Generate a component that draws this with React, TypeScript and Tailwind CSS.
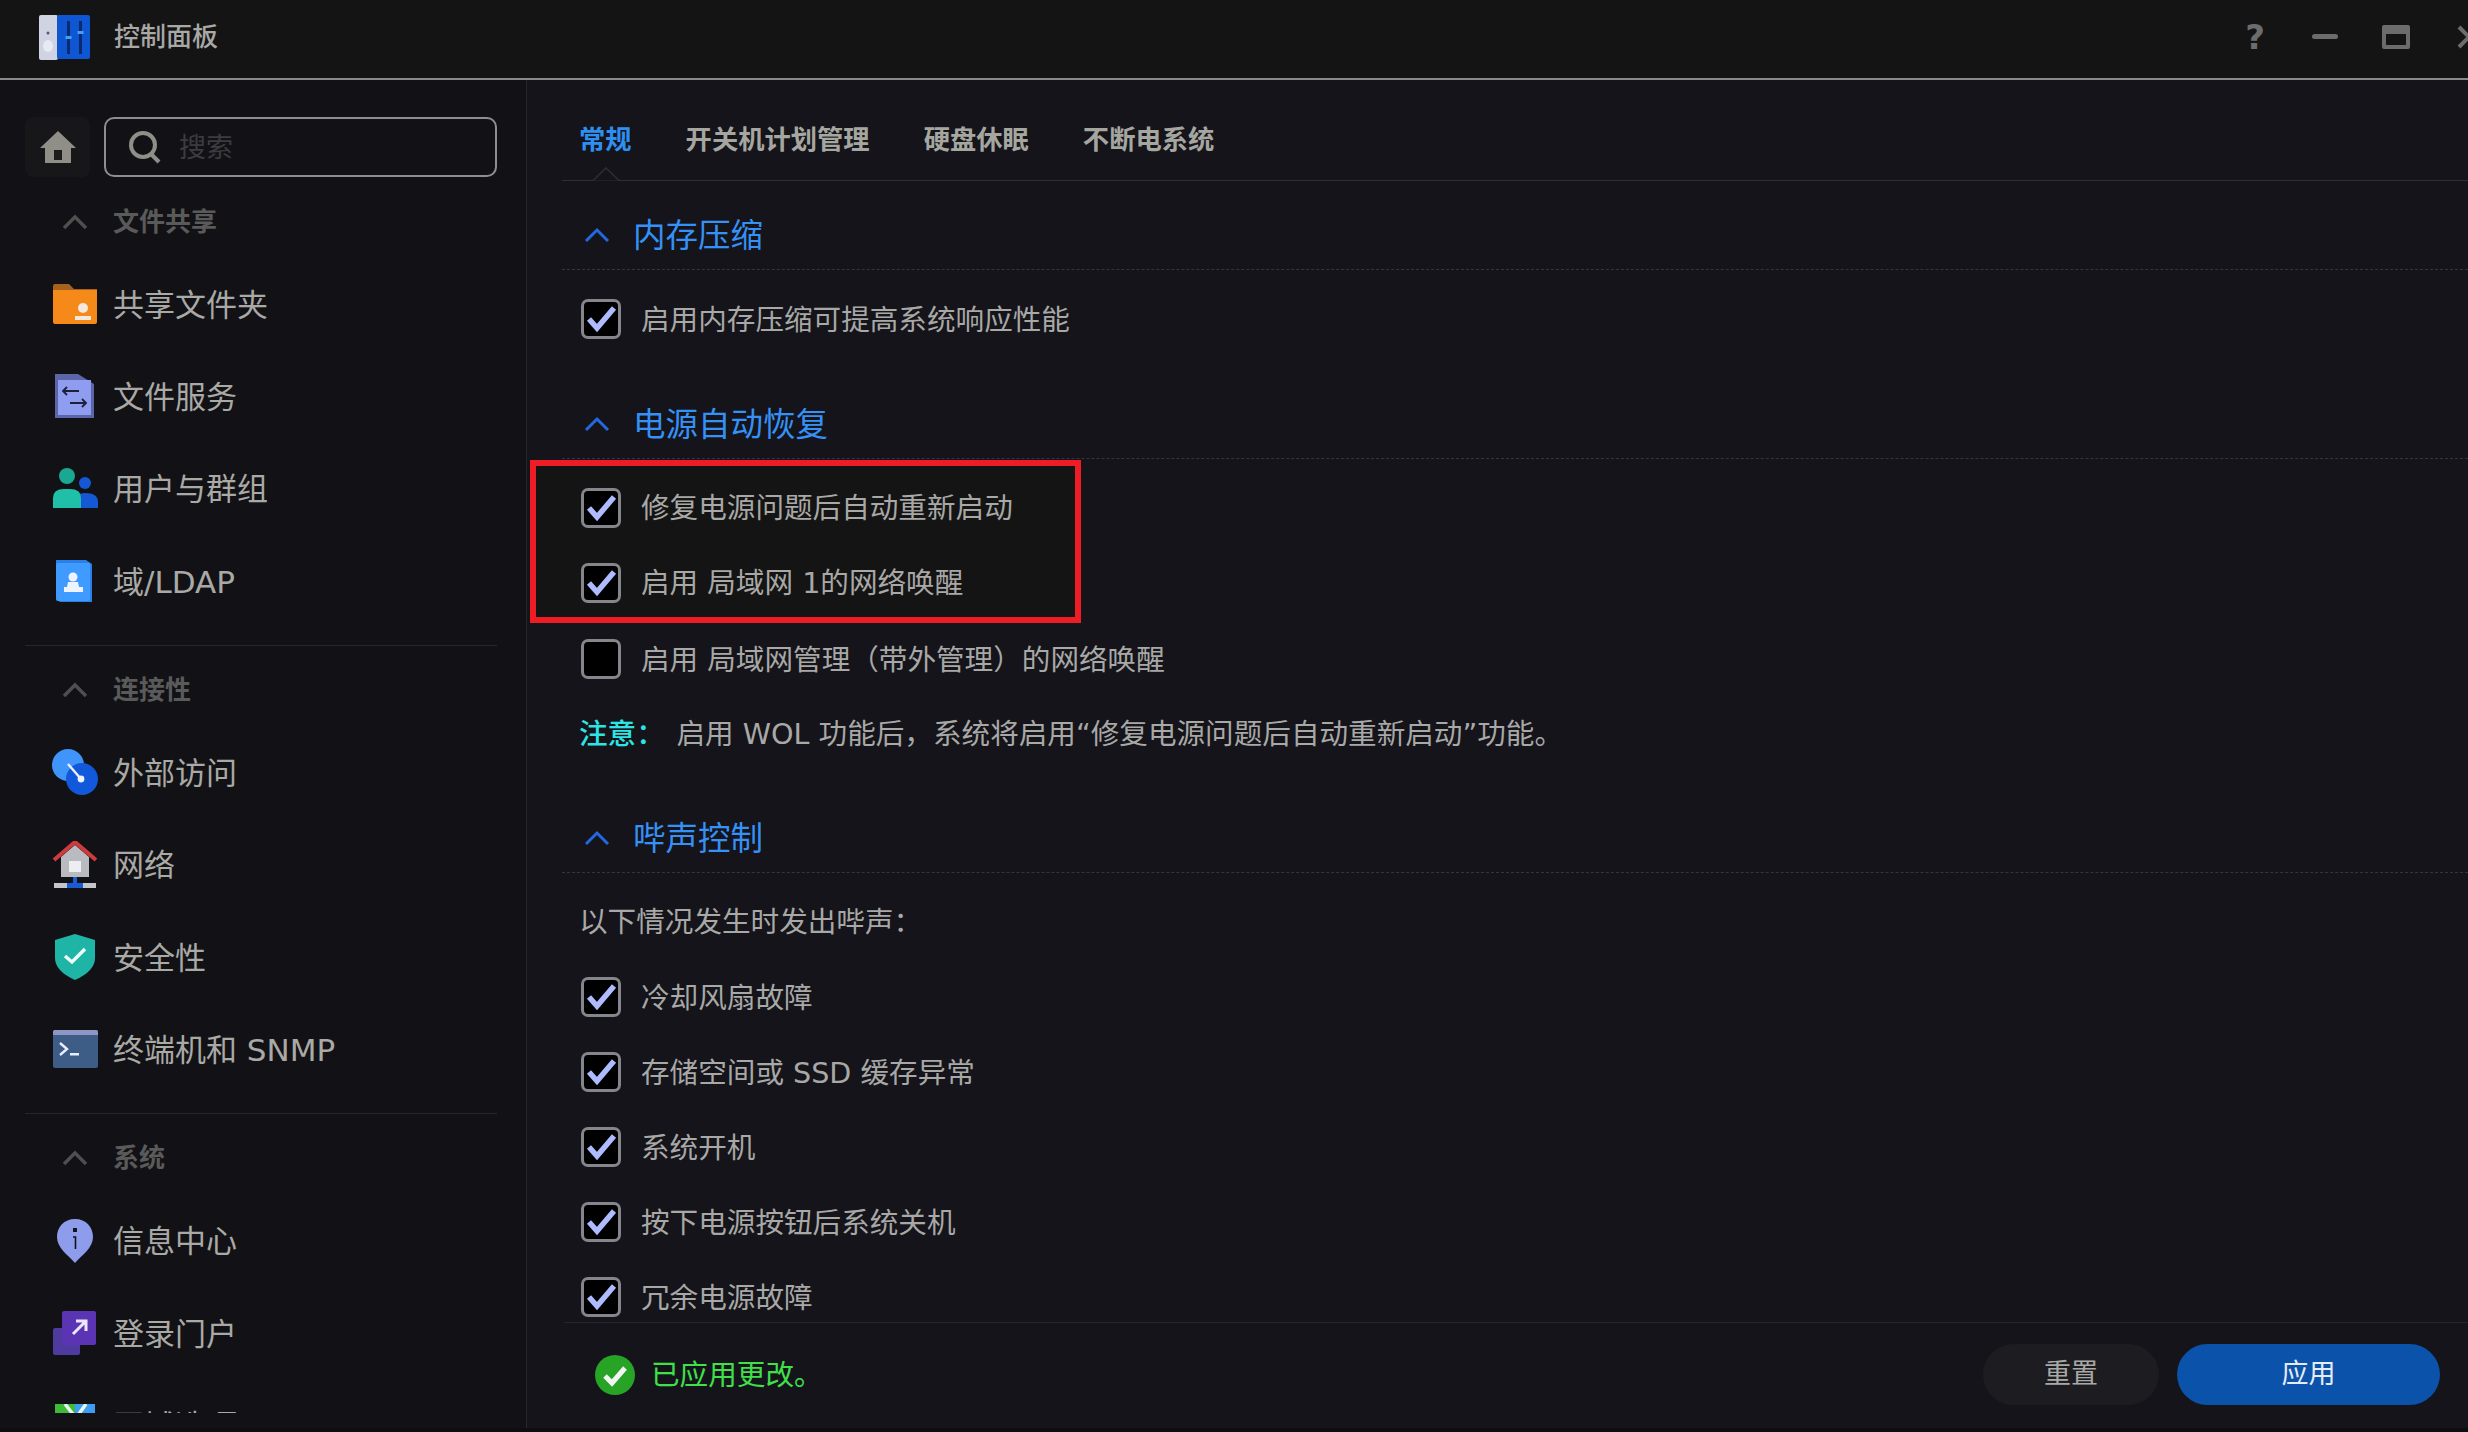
import type { ReactNode } from "react";

const Chevron = ({ blue }: { blue?: boolean }) => (
  <svg width="26" height="16" viewBox="0 0 26 16" fill="none" className="shrink-0">
    <path d="M2 14 L13 3 L24 14" stroke={blue ? "#2468e0" : "#4f4f4f"} strokeWidth={blue ? 3 : 3.4} />
  </svg>
);

const FolderIcon = () => (
  <svg width="46" height="42" viewBox="0 0 46 42">
    <path d="M1 3 Q1 1 3 1 H17 L22 6 H45 V12 H1 Z" fill="#a4621f" />
    <path d="M1 7 H45 V39 Q45 41 43 41 H3 Q1 41 1 39 Z" fill="#f58a1b" />
    <circle cx="31" cy="25" r="5" fill="#f4e9df" />
    <rect x="23" y="33" width="16" height="4" fill="#f4e9df" />
  </svg>
);
const FileIcon = () => (
  <svg width="46" height="46" viewBox="0 0 46 46">
    <path d="M3 1 H26 L42 11 V45 H3 Z" fill="#5b65a8" />
    <path d="M6 7 H39 V42 H6 Z" fill="#8f9df0" />
    <path d="M27 18 H11 M15 14 L11 18 L15 22 M18 30 H34 M30 26 L34 30 L30 34" stroke="#1c2038" strokeWidth="1.8" fill="none" />
  </svg>
);
const UsersIcon = () => (
  <svg width="46" height="42" viewBox="0 0 46 42">
    <circle cx="33" cy="15" r="6" fill="#1458d6" />
    <path d="M24 40 V32 Q24 25 33 25 Q46 25 46 34 V40 Z" fill="#1458d6" />
    <circle cx="15" cy="8" r="8" fill="#1aa893" />
    <path d="M1 40 V30 Q1 21 12 21 H18 Q29 21 29 30 V40 Z" fill="#1fbfa8" />
  </svg>
);
const LdapIcon = () => (
  <svg width="46" height="44" viewBox="0 0 46 44">
    <path d="M4 1 H34 L40 5 V43 H8 L4 40 Z" fill="#2b7fe6" />
    <rect x="4" y="4" width="34" height="38" rx="2" fill="#3f9bff" />
    <circle cx="21" cy="18" r="4.5" fill="#eef4ff" />
    <path d="M16 23 H26 L27 28 H15 Z" fill="#eef4ff" />
    <rect x="12" y="28" width="19" height="5" fill="#eef4ff" />
  </svg>
);
const ExternalIcon = () => (
  <svg width="46" height="46" viewBox="0 0 46 46">
    <circle cx="16" cy="16" r="16" fill="#3f95fb" />
    <circle cx="30" cy="30" r="16" fill="#1158da" />
    <path d="M16 15 L29 30" stroke="#eef2ff" strokeWidth="2.4" />
    <circle cx="29" cy="30" r="3.4" fill="#eef2ff" />
  </svg>
);
const NetworkIcon = () => (
  <svg width="46" height="48" viewBox="0 0 46 48">
    <path d="M9 16 L23 4 L37 16 V36 H9 Z" fill="#b9bbc0" />
    <path d="M2 19 L23 1 L44 19" fill="none" stroke="#cf3a3c" strokeWidth="4" />
    <rect x="17" y="20" width="12" height="11" fill="#eceef2" />
    <rect x="21" y="36" width="4" height="8" fill="#1a5bd0" />
    <rect x="2" y="42" width="42" height="5" fill="#c4c5c8" />
    <rect x="15" y="42" width="16" height="5" fill="#1a5bd0" />
  </svg>
);
const ShieldIcon = () => (
  <svg width="46" height="48" viewBox="0 0 46 48">
    <path d="M23 1 L43 7 V25 Q43 38 23 47 Q3 38 3 25 V7 Z" fill="#1fb5a6" />
    <path d="M13 23 L20 29 L33 16" stroke="#f0fbfa" strokeWidth="3.4" fill="none" />
  </svg>
);
const TerminalIcon = () => (
  <svg width="46" height="38" viewBox="0 0 46 38">
    <rect x="1" y="0" width="45" height="38" rx="2" fill="#3d5c86" />
    <path d="M1 2 Q1 0 3 0 H44 Q46 0 46 2 V5 H1 Z" fill="#8e96c4" />
    <path d="M8 13 L15 19 L8 25" stroke="#e8edff" strokeWidth="2.4" fill="none" />
    <rect x="18" y="23" width="9" height="2.5" fill="#e8edff" />
  </svg>
);
const InfoIcon = () => (
  <svg width="46" height="46" viewBox="0 0 46 46">
    <path d="M23 1 C34 1 41 9 41 19 C41 30 30 37 23 45 C16 37 5 30 5 19 C5 9 12 1 23 1 Z" fill="#8d9ceb" />
    <rect x="21" y="10" width="4" height="4" fill="#12121a" />
    <path d="M21 19 H23.5 V31" stroke="#12121a" strokeWidth="1.6" fill="none" />
  </svg>
);
const PortalIcon = () => (
  <svg width="46" height="46" viewBox="0 0 46 46">
    <rect x="1" y="18" width="27" height="27" rx="2" fill="#4f3aa0" />
    <rect x="10" y="1" width="34" height="34" rx="2" fill="#5b34b4" />
    <path d="M21 24 L34 11 M24 11 H34 V21" stroke="#eee6ff" strokeWidth="3" fill="none" />
  </svg>
);
const RegionIcon = () => (
  <svg width="42" height="42" viewBox="0 0 42 42">
    <path d="M1 0 H21 V42 H1 Z" fill="#3dba38" />
    <path d="M21 0 H41 V42 H21 Z" fill="#3c9df2" />
    <path d="M11 0 L22 14 L32 0" stroke="#eaf5ea" strokeWidth="3.5" fill="none" />
  </svg>
);

const Item = ({ icon, label }: { icon: ReactNode; label: string }) => (
  <div className="flex h-[92.3px] items-center pl-[27px]">
    <div className="flex w-[46px] shrink-0 items-center justify-center">{icon}</div>
    <span className="mt-[2px] ml-[15px] text-[31px] text-[#a9a9a5]">{label}</span>
  </div>
);

const SideHead = ({ label }: { label: string }) => (
  <div className="flex h-[60px] items-center pl-[37px]">
    <Chevron />
    <span className="ml-[25px] text-[26px] font-bold text-[#5a5a5a]">{label}</span>
  </div>
);

const Divider = () => <div className="mt-[18px] mr-[29px] h-px bg-[#26262b]" />;

const Box = ({ on = true }: { on?: boolean }) => (
  <span className="flex h-[40px] w-[40px] shrink-0 items-center justify-center rounded-[7px] border-[3px] border-[#85858c] bg-black">
    {on && (
      <svg width="31" height="28" viewBox="0 0 31 28" fill="none">
        <path d="M3 14 L11 23 L28 3" stroke="#aebbff" strokeWidth="5.5" />
      </svg>
    )}
  </span>
);

const Check = ({ label, on, boxed }: { label: string; on?: boolean; boxed?: boolean }) => (
  <div className={boxed ? "flex h-[75px] items-center pl-[45px] pt-[9px]" : "flex h-[75px] items-center pl-[19px]"}>
    <Box on={on} />
    <span className={boxed ? "ml-[20px] text-[28.6px] text-[#a8a8a6]" : "mt-[3px] ml-[20px] text-[28.6px] text-[#a8a8a6]"}>{label}</span>
  </div>
);

const SectionHead = ({ label }: { label: string }) => (
  <div className="flex h-[89px] items-center border-b border-dashed border-[#35353b] pt-[20px] pl-[22px]">
    <Chevron blue />
    <span className="mt-[3px] ml-[23px] text-[32.5px] text-[#3591f5]">{label}</span>
  </div>
);

const Tab = ({ label, active }: { label: string; active?: boolean }) => (
  <span className={active ? "text-[26.3px] font-bold text-[#2f8ff0]" : "text-[26.3px] font-bold text-[#a6a6a0]"}>{label}</span>
);

export default function App() {
  return (
    <div className="flex h-[1432px] w-[2468px] flex-col overflow-hidden bg-[#101012] [font-family:'DejaVu_Sans','Noto_Sans_CJK_SC',sans-serif]">
      {/* Title bar */}
      <header className="flex h-[80px] shrink-0 items-center border-b-2 border-[#8a8a8a] bg-[#141414] pl-[39px] pb-[4px]">
        <svg width="51" height="45" viewBox="0 0 51 45">
          <rect x="0" y="0" width="19" height="45" rx="2" fill="#cfd3e2" />
          <circle cx="9" cy="18" r="1.5" fill="#555a70" />
          <ellipse cx="9" cy="31" rx="5" ry="6" fill="#e8eaf3" />
          <rect x="18" y="0" width="33" height="44" rx="2" fill="#0f56d2" />
          <rect x="28" y="6" width="3" height="33" fill="#0a2a6e" />
          <rect x="40" y="6" width="3" height="33" fill="#0a2a6e" />
          <rect x="26.5" y="21" width="6" height="3" fill="#3fa0ff" />
          <rect x="38.5" y="16" width="6" height="3" fill="#3fa0ff" />
        </svg>
        <span className="ml-[24px] text-[26px] font-medium text-[#a8a8a6]">控制面板</span>
        <div className="ml-auto flex items-center">
          <span className="ml-[2px] w-[20px] text-center text-[34px] font-bold leading-none text-[#6c6c6c]">?</span>
          <svg width="26" height="6" viewBox="0 0 26 6" className="ml-[47px]">
            <rect width="26" height="5" rx="2.5" fill="#6c6c6c" />
          </svg>
          <svg width="28" height="24" viewBox="0 0 28 24" className="ml-[44px]">
            <path d="M2 0 H26 Q28 0 28 2 V22 Q28 24 26 24 H2 Q0 24 0 22 V2 Q0 0 2 0 Z M4 9 V20 H24 V9 Z" fill="#6c6c6c" fillRule="evenodd" />
          </svg>
          <svg width="26" height="26" viewBox="0 0 26 26" className="ml-[46px] -mr-[14px]">
            <path d="M3 3 L23 23 M23 3 L3 23" stroke="#6c6c6c" strokeWidth="4" />
          </svg>
        </div>
      </header>

      <div className="flex min-h-0 flex-1">
        {/* Sidebar */}
        <aside className="w-[527px] shrink-0 border-r border-[#26262b] bg-[#121216]">
          <div className="h-[1333px] overflow-hidden pt-[37px] pl-[25px]">
            <div className="mb-[15px] flex items-center">
              <div className="flex h-[60px] w-[65px] items-center justify-center rounded-[8px] bg-[#17171a]">
                <svg width="36" height="34" viewBox="0 0 36 34">
                  <path d="M18 1 L36 18 H31 V33 H5 V18 H0 Z M14 20 V30 H22 V20 Z" fill="#8f8f88" fillRule="evenodd" />
                  <rect x="14" y="20" width="8" height="10" fill="#1c1c1c" />
                </svg>
              </div>
              <div className="ml-[14px] flex h-[60px] w-[393px] items-center rounded-[10px] border-2 border-[#8e8e92] pl-[22px]">
                <svg width="34" height="34" viewBox="0 0 34 34" fill="none">
                  <circle cx="15" cy="15" r="12" stroke="#8f8f88" strokeWidth="4" />
                  <path d="M23 24 L31 32" stroke="#8f8f88" strokeWidth="4" />
                </svg>
                <span className="mt-[3px] ml-[17px] text-[27px] text-[#3c3c40]">搜索</span>
              </div>
            </div>

            <SideHead label="文件共享" />
            <div className="mt-[6px]">
              <Item icon={<FolderIcon />} label="共享文件夹" />
              <Item icon={<FileIcon />} label="文件服务" />
              <Item icon={<UsersIcon />} label="用户与群组" />
              <Item icon={<LdapIcon />} label="域/LDAP" />
            </div>
            <Divider />

            <div className="mt-[14px]">
              <SideHead label="连接性" />
            </div>
            <div className="mt-[6px]">
              <Item icon={<ExternalIcon />} label="外部访问" />
              <Item icon={<NetworkIcon />} label="网络" />
              <Item icon={<ShieldIcon />} label="安全性" />
              <Item icon={<TerminalIcon />} label="终端机和 SNMP" />
            </div>
            <Divider />

            <div className="mt-[14px]">
              <SideHead label="系统" />
            </div>
            <div className="mt-[6px]">
              <Item icon={<InfoIcon />} label="信息中心" />
              <Item icon={<PortalIcon />} label="登录门户" />
              <Item icon={<RegionIcon />} label="区域选项" />
            </div>
          </div>
        </aside>

        {/* Main */}
        <main className="flex min-w-0 flex-1 flex-col bg-[#14141a]">
          <div className="min-h-0 flex-1 overflow-hidden pl-[35px]">
            <nav className="relative flex h-[101px] items-center gap-[54px] border-b border-[#2e2e33] pt-[22px] pl-[17px]">
              <Tab label="常规" active />
              <Tab label="开关机计划管理" />
              <Tab label="硬盘休眠" />
              <Tab label="不断电系统" />
              <svg width="28" height="14" viewBox="0 0 28 14" className="absolute -bottom-px left-[30px]">
                <path d="M0 13.5 H1 L14 1 L27 13.5 H28" fill="#14141a" stroke="#2e2e33" strokeWidth="1.5" />
              </svg>
            </nav>

            <SectionHead label="内存压缩" />
            <div className="mt-[11.5px] mb-[13.5px]">
              <Check label="启用内存压缩可提高系统响应性能" on />
            </div>

            <SectionHead label="电源自动恢复" />
            <div className="mt-px -ml-[32px] h-[163px] w-[551px] border-[6px] border-[#ee1c25] bg-[#141414]">
              <Check label="修复电源问题后自动重新启动" on boxed />
              <Check label="启用 局域网 1的网络唤醒" on boxed />
            </div>
            <div className="-mt-[1.5px]">
              <Check label="启用 局域网管理（带外管理）的网络唤醒" on={false} />
            </div>
            <div className="flex h-[75px] items-center pl-[17px] text-[28.6px] text-[#a8a8a6]">
              <span className="w-[97.5px] font-medium text-[#2fe3e3]">注意：</span>
              <span>启用 WOL 功能后，系统将启用“修复电源问题后自动重新启动”功能。</span>
            </div>

            <div className="mt-[12.5px]">
              <SectionHead label="哔声控制" />
            </div>
            <div className="mt-[11px] flex h-[75px] items-center pl-[17px] text-[28.6px] text-[#a8a8a6]">
              <span className="mt-[2px]">以下情况发生时发出哔声：</span>
            </div>
            <Check label="冷却风扇故障" on />
            <Check label="存储空间或 SSD 缓存异常" on />
            <Check label="系统开机" on />
            <Check label="按下电源按钮后系统关机" on />
            <Check label="冗余电源故障" on />
          </div>

          {/* Footer */}
          <footer className="ml-[37px] flex h-[106px] shrink-0 items-start border-t border-[#25252b] pt-[21px] pl-[31px] pr-[28px]">
            <div className="flex h-[61px] w-full items-center">
              <svg width="40" height="40" viewBox="0 0 40 40">
                <circle cx="20" cy="20" r="20" fill="#27a325" />
                <path d="M10 21 L17 28 L30 13" stroke="#f2f5f2" strokeWidth="5" fill="none" />
              </svg>
              <span className="mt-[2px] ml-[16px] text-[28.6px] text-[#3fe04a]">已应用更改。</span>
              <button className="ml-auto h-[61px] w-[176px] rounded-full bg-[#1d1c20] text-[27px] text-[#a8a8a6]">重置</button>
              <button className="ml-[18px] h-[61px] w-[263px] rounded-full bg-[#0b52ab] text-[27px] text-[#e6ecf5]">应用</button>
            </div>
          </footer>
        </main>
      </div>
      <div className="h-[4px] shrink-0 bg-[#0e0e10]" />
    </div>
  );
}
